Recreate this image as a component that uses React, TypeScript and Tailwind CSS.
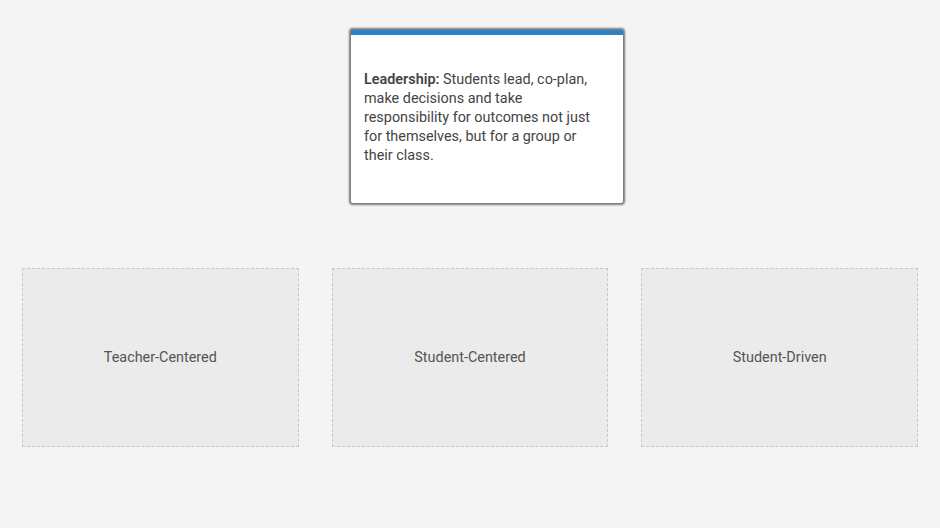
const zones = ["Teacher-Centered", "Student-Centered", "Student-Driven"];

export default function App() {
  return (
    <div className="min-h-[528px] w-[940px] bg-[#f4f4f4] font-['Roboto',sans-serif]">
      <div className="pt-[30px] pl-[351px]">
        <div className="flex h-[173px] w-[272px] items-center rounded-[2px] border-t-[5px] border-[#2a82c7] bg-white pb-[4px] pl-[13px] pr-[20px] shadow-[0_0_2px_2px_rgba(0,0,0,0.5)]">
          <p className="text-[14.4px] leading-[19px] text-[#444]">
            <span className="font-semibold">Leadership:</span> Students lead, co-plan, make decisions and take
            responsibility for outcomes not just for themselves, but for a group or their class.
          </p>
        </div>
      </div>
      <div className="mt-[65px] flex gap-[33px] px-[22px]">
        {zones.map((z) => (
          <div
            key={z}
            className="flex h-[179px] w-[277px] items-center justify-center border border-dashed border-[#c8c8c8] bg-[#ebebeb] text-[14.4px] text-[#555]"
          >
            {z}
          </div>
        ))}
      </div>
    </div>
  );
}
